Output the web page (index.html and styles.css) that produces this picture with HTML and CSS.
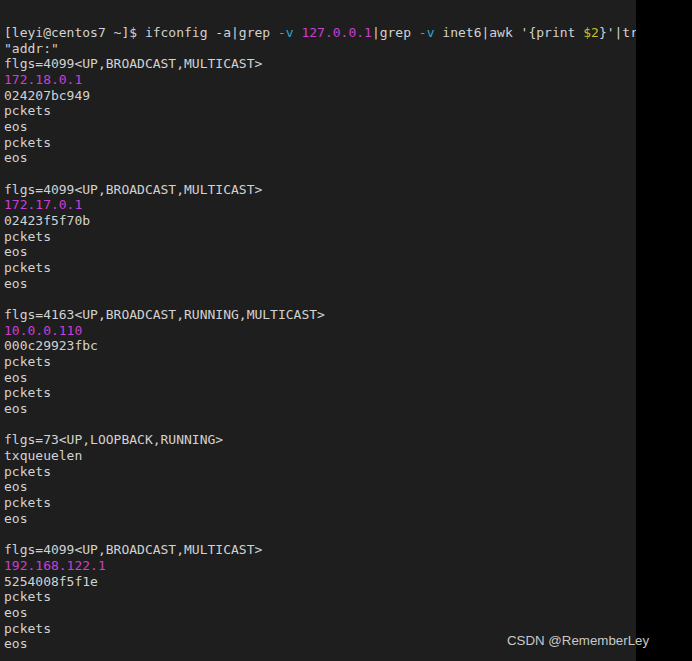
FILE: index.html
```html
<!DOCTYPE html>
<html>
<head>
  <meta charset="UTF-8">
  <title>Terminal</title>
  <link rel="stylesheet" href="styles.css">
</head>
<body>
  <div class="screen">
    <pre class="terminal">[leyi@centos7 ~]$ ifconfig -a|grep <span class="opt">-v</span> <span class="hl">127.0.0.1</span>|grep <span class="opt">-v</span> inet6|awk '{print <span class="var">$2</span>}'|tr
"addr:"
flgs=4099&lt;UP,BROADCAST,MULTICAST&gt;
<span class="hl">172.18.0.1</span>
024207bc949
pckets
eos
pckets
eos

flgs=4099&lt;UP,BROADCAST,MULTICAST&gt;
<span class="hl">172.17.0.1</span>
02423f5f70b
pckets
eos
pckets
eos

flgs=4163&lt;UP,BROADCAST,RUNNING,MULTICAST&gt;
<span class="hl">10.0.0.110</span>
000c29923fbc
pckets
eos
pckets
eos

flgs=73&lt;UP,LOOPBACK,RUNNING&gt;
txqueuelen
pckets
eos
pckets
eos

flgs=4099&lt;UP,BROADCAST,MULTICAST&gt;
<span class="hl">192.168.122.1</span>
5254008f5f1e
pckets
eos
pckets
eos</pre>
  </div>
  <div class="watermark">CSDN @RememberLey</div>
</body>
</html>
```

FILE: styles.css
```css
html, body {
  margin: 0;
  padding: 0;
  background: #000;
  height: 100%;
  overflow: hidden;
}
.screen {
  width: 636px;
  height: 661px;
  background: #1e1e1e;
  overflow: hidden;
}
.terminal {
  margin: 0;
  padding: 25px 0 0 4px;
  font-family: "DejaVu Sans Mono", "Liberation Mono", monospace;
  font-size: 13px;
  line-height: 15.67px;
  color: #d2d2d2;
  white-space: pre;
}
.hl {
  color: #c83fd4;
}
.opt {
  color: #2fa8d8;
}
.var {
  color: #c2c32a;
}
.watermark {
  position: absolute;
  left: 507px;
  top: 633px;
  font-family: "Liberation Sans", Arial, sans-serif;
  font-size: 13.3px;
  color: #c8c8c8;
}
```
